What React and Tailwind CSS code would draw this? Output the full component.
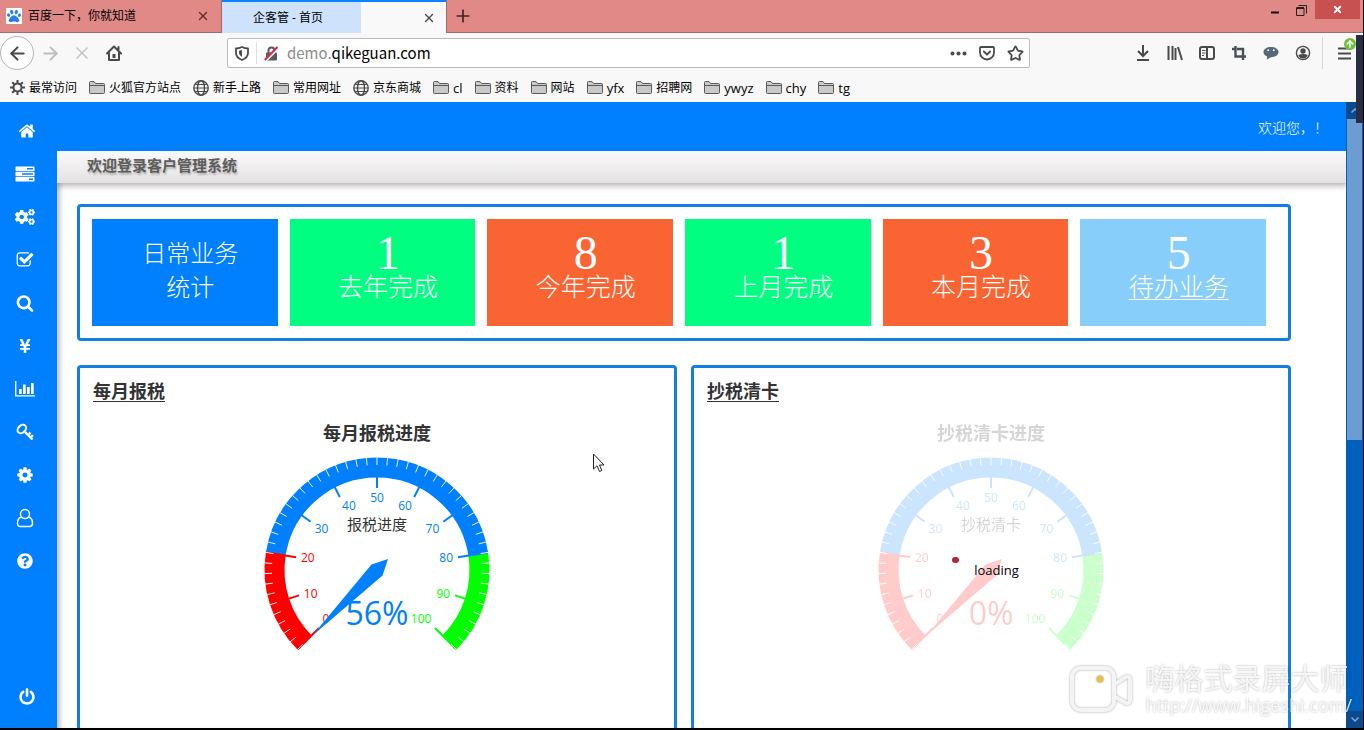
import React from "react";
import { ArrowLeft, ArrowRight, ArrowUp, X, Plus, Star } from "lucide-react";
import { FaCogs, FaYenSign, FaQuestionCircle, FaPaw } from "react-icons/fa";

const BLUE = "#0080ff";
const RED = "#ff0000";
const GREEN = "#00ff00";

const Fa = ({ d, size = 18 }) => (
  <svg viewBox="0 0 1792 1792" width={size} height={size} fill="currentColor">
    <path d={d} />
  </svg>
);

const HOME =
  "M1472 992v480q0 26-19 45t-45 19h-384v-384h-256v384h-384q-26 0-45-19t-19-45v-480q0-1 .5-3t.5-3l575-474 575 474q1 2 1 6zm223-69l-62 74q-8 9-21 11h-3q-13 0-21-7l-692-577-692 577q-12 8-24 7-13-2-21-11l-62-74q-8-10-7-23.5t11-21.5l719-599q32-26 76-26t76 26l244 204v-195q0-14 9-23t23-9h192q14 0 23 9t9 23v408l219 182q10 8 11 21.5t-7 23.5z";
const COG =
  "M1152 896q0-106-75-181t-181-75-181 75-75 181 75 181 181 75 181-75 75-181zm512-109v222q0 12-8 23t-20 13l-185 28q-19 54-39 91 35 50 107 138 10 12 10 25t-9 23q-27 37-99 108t-94 71q-12 0-26-9l-138-108q-44 23-91 38-16 136-29 186-7 28-36 28h-222q-14 0-24.5-8.5t-11.5-21.5l-28-184q-49-16-90-37l-141 107q-10 9-25 9-14 0-25-11-126-114-165-168-7-10-7-23 0-12 8-23 15-21 51-66.5t54-70.5q-27-50-41-99l-183-27q-13-2-21-12.5t-8-23.5v-222q0-12 8-23t19-13l186-28q14-46 39-92-40-57-107-138-10-12-10-24 0-10 9-23 26-36 98.5-107.5t94.5-71.5q13 0 26 10l138 107q44-23 91-38 16-136 29-186 7-28 36-28h222q14 0 24.5 8.5t11.5 21.5l28 184q49 16 90 37l142-107q9-9 24-9 13 0 25 10 129 119 165 170 7 8 7 22 0 12-8 23-15 21-51 66.5t-54 70.5q26 50 41 98l183 28q13 2 21 12.5t8 23.5z";
const SEARCH =
  "M1216 832q0-185-131.5-316.5t-316.5-131.5-316.5 131.5-131.5 316.5 131.5 316.5 316.5 131.5 316.5-131.5 131.5-316.5zm512 832q0 52-38 90t-90 38q-54 0-90-38l-343-342q-179 124-399 124-143 0-273.5-55.5t-225-150-150-225-55.5-273.5 55.5-273.5 150-225 225-150 273.5-55.5 273.5 55.5 225 150 150 225 55.5 273.5q0 220-124 399l343 343q37 37 37 90z";
const CHECK =
  "M1472 930v318q0 119-84.5 203.5t-203.5 84.5h-832q-119 0-203.5-84.5t-84.5-203.5v-832q0-119 84.5-203.5t203.5-84.5h832q63 0 117 25 15 7 18 23 3 17-9 29l-49 49q-10 10-23 10-3 0-9-2-23-6-45-6h-832q-66 0-113 47t-47 113v832q0 66 47 113t113 47h832q66 0 113-47t47-113v-254q0-13 9-22l64-64q10-10 23-10 6 0 12 3 20 8 20 29zm231-489l-814 814q-24 24-57 24t-57-24l-430-430q-24-24-24-57t24-57l110-110q24-24 57-24t57 24l263 263 647-647q24-24 57-24t57 24l110 110q24 24 24 57t-24 57z";
const POWER =
  "M1664 896q0 156-61 298t-164 245-245 164-298 61-298-61-245-164-164-245-61-298q0-182 80.5-343t226.5-270q43-32 95.5-25t83.5 50q32 42 24.5 94.5t-49.5 84.5q-98 74-151.5 181t-53.5 228q0 104 40.5 198.5t109.5 163.5 163.5 109.5 198.5 40.5 198.5-40.5 163.5-109.5 109.5-163.5 40.5-198.5q0-121-53.5-228t-151.5-181q-42-32-49.5-84.5t24.5-94.5q31-43 84-50t95 25q146 109 226.5 270t80.5 343zm-640-768v640q0 52-38 90t-90 38-90-38-38-90v-640q0-52 38-90t90-38 90 38 38 90z";

const ServerIcon = () => (
  <svg width="20" height="16" viewBox="0 0 20 16">
    <g fill="currentColor">
      <rect x="0.5" y="0.5" width="19" height="4.4" rx="0.6" />
      <rect x="0.5" y="5.8" width="19" height="4.4" rx="0.6" />
      <rect x="0.5" y="11.1" width="19" height="4.4" rx="0.6" />
    </g>
    <path d="M12 2.7h6M7 8h11M14 13.3h4" stroke={BLUE} strokeWidth="1.4" />
  </svg>
);

const ChartIcon = () => (
  <svg width="20" height="16" viewBox="0 0 20 16" fill="currentColor">
    <path d="M0 0h1.4v14.2H20v1.4H0zM4 8h2.7v5H4zM8 3.5h2.7V13H8zM12 6h2.7v7H12zM16 2h2.7v11H16z" />
  </svg>
);

const KeyIcon = () => (
  <svg width="18" height="18" viewBox="0 0 18 18" fill="none" stroke="currentColor">
    <ellipse cx="5.8" cy="6" rx="3.6" ry="4.8" transform="rotate(45 5.8 6)" strokeWidth="2" />
    <path d="M9 9l7.5 7.5" strokeWidth="2.4" />
    <path d="M12 12l2.6-2.4M14.6 14.4l2.4-2.2" strokeWidth="2.2" />
  </svg>
);

const UserIcon = () => (
  <svg width="18" height="20" viewBox="0 0 18 20" fill="none" stroke="currentColor" strokeWidth="1.4">
    <circle cx="9" cy="6" r="4.5" />
    <path d="M5.2 9.2C2.500 9.800 1.500 12.400 1.500 15.200c0 2.100 1.200 3.300 3 3.300h9c1.800 0 3-1.200 3-3.300 0-2.800-1-5.400-3.700-6" />
  </svg>
);

const menu = [
  { name: "首页", icon: <Fa d={HOME} />, shift: true },
  { name: "业务", icon: <ServerIcon /> },
  { name: "流程", icon: <FaCogs size={20} /> },
  { name: "任务", icon: <Fa d={CHECK} /> },
  { name: "查询", icon: <Fa d={SEARCH} /> },
  { name: "收费", icon: <FaYenSign size={16} /> },
  { name: "统计", icon: <ChartIcon /> },
  { name: "密码", icon: <KeyIcon /> },
  { name: "设置", icon: <Fa d={COG} /> },
  { name: "用户", icon: <UserIcon /> },
  { name: "帮助", icon: <FaQuestionCircle size={16} /> },
];

const FolderIcon = () => (
  <svg width="16" height="16" viewBox="0 0 16 16" fill="#c9c9c9" stroke="#5a5a5a">
    <path d="M.5 12.500v-10q0-1 1-1h3.500l1.500 2h8q1 0 1 1v8q0 1-1 1h-13q-1 0-1-1z" />
    <path d="M.5 5.500h15" />
  </svg>
);

const GlobeIcon = () => (
  <svg width="16" height="16" viewBox="0 0 16 16" fill="none" stroke="#4a4a4a" strokeWidth="1.4">
    <circle cx="8" cy="8" r="7.2" />
    <ellipse cx="8" cy="8" rx="3.500" ry="7.2" />
    <path d="M1 8h14M2 4.500h12M2 11.500h12" strokeWidth="1" />
  </svg>
);

const GearIcon = () => (
  <svg width="15" height="15" viewBox="0 0 15 15" fill="none" stroke="#4a4a4a">
    <circle cx="7.500" cy="7.500" r="4" strokeWidth="2" />
    <path d="M7.500 0v3M7.500 12v3M0 7.500h3M12 7.500h3M2.200 2.200l2.100 2.100M10.700 10.700l2.100 2.100M2.200 12.800l2.100-2.100M10.700 4.300l2.100-2.100" strokeWidth="2" />
  </svg>
);

const bookmarks = [
  ["最常访问", "gear"],
  ["火狐官方站点"],
  ["新手上路", "globe"],
  ["常用网址"],
  ["京东商城", "globe"],
  ["cl"],
  ["资料"],
  ["网站"],
  ["yfx"],
  ["招聘网"],
  ["ywyz"],
  ["chy"],
  ["tg"],
];

const stats = [
  { value: "1", label: "去年完成", color: "bg-[#00ff80]" },
  { value: "8", label: "今年完成", color: "bg-[#fa6432]" },
  { value: "1", label: "上月完成", color: "bg-[#00ff80]" },
  { value: "3", label: "本月完成", color: "bg-[#fa6432]" },
];

function TabStrip() {
  return (
    <div className="flex h-[33px] shrink-0 bg-[#e18987] text-xs text-black">
      <div className="flex w-[222px] items-center border-r border-b border-[#9c6b78] pl-[6px] pr-[11px]">
        <span className="flex h-4 w-4 items-center justify-center bg-white text-[#2a80e8]">
          <FaPaw size={14} />
        </span>
        <span className="ml-[6px] flex-1">百度一下，你就知道</span>
        <button aria-label="关闭标签页">
          <X size={14} strokeWidth={2.2} color="#5a2b2b" />
        </button>
      </div>
      <div className="flex w-[224px] items-center border-t-2 border-[#0a84ff] bg-[#f9f9fa] pr-[10px]">
        <span className="flex h-full w-[139px] items-center bg-[#cfe2fc] pl-[31px]">企客管 - 首页</span>
        <button aria-label="关闭标签页" className="ml-auto">
          <X size={14} strokeWidth={2.2} color="#444" />
        </button>
      </div>
      <div className="flex flex-1 items-start border-b border-l border-[#9c6b78]">
        <button aria-label="新建标签页" className="self-center pl-[6px]">
          <Plus size={20} strokeWidth={2} color="#4a2020" />
        </button>
        <button aria-label="最小化" className="ml-auto flex h-5 w-6 items-center justify-center">
          <svg width="8" height="10"><path d="M0 7.500h8" stroke="#111" strokeWidth="2" /></svg>
        </button>
        <button aria-label="还原" className="flex h-5 w-7 items-center justify-center">
          <svg width="11" height="11" fill="none" stroke="#222">
            <path d="M.5 3h7.500v7.500H.5zM2.500 .5h8v8" />
            <path d="M.5 3h7.500" strokeWidth="2" />
          </svg>
        </button>
        <button aria-label="关闭" className="mr-[3px] flex h-[19px] w-[45px] items-center justify-center bg-[#c75050]">
          <X size={11} strokeWidth={4} color="#fff" />
        </button>
      </div>
    </div>
  );
}

function NavBar() {
  return (
    <div className="flex h-10 shrink-0 items-center text-[#4a4a4c]">
      <button aria-label="后退" className="flex h-[34px] w-[34px] items-center justify-center rounded-full border border-[#b5b5b5] bg-white">
        <ArrowLeft size={21} strokeWidth={2.4} />
      </button>
      <button aria-label="前进" className="flex w-8 justify-center text-[#bdbdbd]">
        <ArrowRight size={21} strokeWidth={2.2} />
      </button>
      <button aria-label="停止" className="flex w-8 justify-center text-[#c6c6c6]">
        <X size={20} strokeWidth={2} />
      </button>
      <button aria-label="主页" className="flex w-8 justify-center">
        <svg width="16" height="16" viewBox="0 0 16 16" fill="none" stroke="currentColor" strokeWidth="2" strokeLinejoin="round" strokeLinecap="round">
          <path d="M1 8.500l7-7 7 7M3 7.500V15h10V7.500M12.500 2v3" />
          <path d="M8 9v4" strokeWidth="3" strokeLinecap="butt" />
        </svg>
      </button>
      <div className="ml-[97px] mr-[105px] flex h-[30px] flex-1 items-center rounded-xs border border-[#bcbcbc] bg-white pr-[5px]">
        <svg className="ml-[7px]" width="14" height="15" viewBox="0 0 14 15" fill="none" stroke="currentColor" strokeWidth="1.800">
          <path d="M1 2.500Q4 2.500 7 1q3 1.500 6 1.500V7q0 4.500-6 7-6-2.500-6-7z" strokeLinejoin="round" />
          <path d="M7 4v7Q4 9.500 4 7V4.800z" fill="currentColor" stroke="none" />
        </svg>
        <span className="ml-[7px] h-[22px] w-px bg-[#dedede]" />
        <svg className="ml-[7px]" width="15" height="15" viewBox="0 0 15 15">
          <rect x="2" y="6.500" width="11" height="8" rx="1" fill="#5a5a5a" />
          <path d="M4.500 7V4.500a3 3 0 016 0V7" fill="none" stroke="#5a5a5a" strokeWidth="2" />
          <path d="M1.800 15L14.500 2.300" stroke="#fff" strokeWidth="2" />
          <path d="M.7 14L13.500 1" stroke="#d7264c" strokeWidth="2" />
        </svg>
        <label htmlFor="url" className="ml-[8px] text-[15px] leading-5 text-[#8b8b8b] font-['Noto_Sans_CJK_SC',sans-serif]">demo.</label>
        <input id="url" type="text" defaultValue="qikeguan.com" className="h-5 min-w-0 flex-1 text-[15px] leading-5 text-black outline-none font-['Noto_Sans_CJK_SC',sans-serif]" />
        <div className="flex items-center gap-3">
          <button aria-label="页面操作">
            <svg width="17" height="5" fill="currentColor"><circle cx="2.500" cy="2.500" r="2" /><circle cx="8.500" cy="2.500" r="2" /><circle cx="14.500" cy="2.500" r="2" /></svg>
          </button>
          <button aria-label="保存到 Pocket">
            <svg width="16" height="15" viewBox="0 0 16 15" fill="none" stroke="currentColor" strokeWidth="1.800" strokeLinecap="round" strokeLinejoin="round">
              <path d="M2 1h12q1 0 1 1v4.500a7 7 0 01-14 0V2q0-1 1-1zM4.800 5.500L8 8.500l3.200-3" />
            </svg>
          </button>
          <button aria-label="收藏">
            <Star size={17} strokeWidth={2.5} />
          </button>
        </div>
      </div>
      <div className="flex items-center gap-4">
        <svg width="16" height="16" viewBox="0 0 16 16" fill="none" stroke="currentColor" strokeWidth="2">
          <path d="M8 0v10M3 6l5 5 5-5M2 15h12" />
        </svg>
        <svg width="16" height="16" viewBox="0 0 16 16" fill="none" stroke="currentColor" strokeWidth="2">
          <path d="M1.500 1v14M5.500 1v14M8.500 3v12M11 2l4 13" />
        </svg>
        <svg width="16" height="16" viewBox="0 0 16 16" fill="none" stroke="currentColor" strokeWidth="2">
          <rect x="1" y="2" width="14" height="12" rx="2" />
          <path d="M8 2v12" />
          <path d="M3 5.500h3.500M3 8h3.500M3 10.500h2" strokeWidth="1.200" />
        </svg>
        <svg width="16" height="16" viewBox="0 0 16 16" fill="none" stroke="#46505c" strokeWidth="2.400">
          <path d="M1 4h3M4.500 1v10.500H15M6 4h6v8M12 12v3" />
        </svg>
        <svg width="16" height="16" viewBox="0 0 17 16">
          <path d="M8.500 1.500c4.500 0 8 2.200 8 5.500s-3.500 5.500-8 5.500L4 15l.5-3.200C2 11 .5 9.200.5 7c0-3.300 3.500-5.500 8-5.500z" fill="#596879" />
          <circle cx="5.500" cy="5" r="1" fill="#fff" /><circle cx="11.500" cy="5" r="1" fill="#fff" />
        </svg>
        <svg width="16" height="16" viewBox="0 0 16 16">
          <circle cx="8" cy="8" r="6.600" fill="none" stroke="currentColor" strokeWidth="1.400" />
          <circle cx="8" cy="6" r="2.700" fill="currentColor" />
          <path d="M3.200 10q4.800-2 9.600 0-1.500 3.500-4.800 3.500T3.200 10z" fill="currentColor" />
        </svg>
      </div>
      <span className="ml-[11px] h-8 w-px bg-[#d8d8d8]" />
      <button aria-label="打开菜单" className="relative mr-[12px] ml-[15px]">
        <svg width="13" height="13" stroke="currentColor" strokeWidth="2"><path d="M0 1.500h13M0 6.500h13M0 11.500h13" /></svg>
        <span className="absolute -top-[9px] left-[6px] flex h-3 w-3 items-center justify-center rounded-full bg-[#6fbf3a]">
          <ArrowUp size={10} strokeWidth={3.500} color="#fff" />
        </span>
      </button>
    </div>
  );
}

function Bookmarks() {
  return (
    <div className="flex h-[29px] shrink-0 items-center gap-3 pl-[10px] text-xs text-black">
      {bookmarks.map(([name, icon]) => (
        <a
          key={name}
          href="#"
          className={`flex items-center gap-1 whitespace-nowrap ${/^[a-z]/.test(name) ? "text-[13px] leading-4" : ""}`}
        >
          {icon === "gear" ? <GearIcon /> : icon === "globe" ? <GlobeIcon /> : <FolderIcon />}
          {name}
        </a>
      ))}
    </div>
  );
}

function Sidebar() {
  return (
    <nav className="flex w-[57px] shrink-0 flex-col bg-[#0080ff] pt-[7px] text-white">
      {menu.map((m) => (
        <a
          key={m.name}
          href="#"
          aria-label={m.name}
          className={`flex h-[43px] items-center justify-center ${m.shift ? "pr-[3px]" : "pr-[7px]"}`}
        >
          {m.icon}
        </a>
      ))}
      <a href="#" aria-label="退出" className="mt-auto mb-[10px] flex h-[43px] items-center justify-center pr-[3px]">
        <Fa d={POWER} />
      </a>
    </nav>
  );
}

const polar = (value, r) => {
  const a = ((225 - value * 2.7) * Math.PI) / 180;
  return [r * Math.cos(a), -r * Math.sin(a)];
};

const arc = (from, to) => {
  const [x1, y1] = polar(from, 102.5);
  const [x2, y2] = polar(to, 102.5);
  return `M${x1} ${y1}A102.5 102.5 0 0 1 ${x2} ${y2}`;
};

const colorOf = (v) => (v <= 20 ? RED : v <= 80 ? BLUE : GREEN);

function Gauge({ name, text, color }) {
  const ticks = Array.from({ length: 51 }, (_, i) => i * 2);
  const labels = Array.from({ length: 11 }, (_, i) => i * 10);

  return (
    <svg viewBox="-120 -125 240 225" width="240" height="225" className="mx-auto block">
      <g fill="none" strokeWidth="20">
        <path d={arc(0, 20)} stroke={RED} />
        <path d={arc(20, 80)} stroke={BLUE} />
        <path d={arc(80, 100)} stroke={GREEN} />
      </g>
      {labels.map((v) => {
        const [x1, y1] = polar(v, 112);
        const [x2, y2] = polar(v, 82);
        return <line key={v} x1={x1} y1={y1} x2={x2} y2={y2} stroke={colorOf(v)} strokeWidth="2" />;
      })}
      {ticks.map((v) => {
        const [x1, y1] = polar(v, 113);
        const [x2, y2] = polar(v, 105);
        return <line key={v} x1={x1} y1={y1} x2={x2} y2={y2} stroke="#eee" strokeWidth="1" />;
      })}
      {labels.map((v) => {
        const [x, y] = polar(v, 77);
        const anchor = x < -30 ? "start" : x > 30 ? "end" : "middle";
        const dy = y < -30 ? 4 : y > 30 ? -6 : 0;
        return (
          <text key={v} x={x} y={y + dy} fontSize="12" fill={colorOf(v)} textAnchor={anchor} dominantBaseline="central">
            {v}
          </text>
        );
      })}
      <text x="0" y="-46" fontSize="15" fill="#333" textAnchor="middle" dominantBaseline="central">{name}</text>
      <path d="M-65 66L-5.500-5.500 11-11 5.500 5.500z" fill={color} />
      <text x="0" y="42" fontSize="32" fill={color} textAnchor="middle" dominantBaseline="central">{text}</text>
    </svg>
  );
}

function Panel({ title, children }) {
  return (
    <section className="rounded-t-sm border-[3px] border-b-0 border-[#147de6] pt-[11px]">
      <h2 className="px-[13px] text-lg leading-6 font-bold text-[#333] underline decoration-1 underline-offset-3">{title}</h2>
      {children}
    </section>
  );
}

const ChartTitle = ({ children }) => (
  <h3 className="pt-[18px] text-center text-lg leading-6 font-bold text-[#333]">{children}</h3>
);

function Dashboard() {
  return (
    <main className="flex min-h-0 flex-1 flex-col overflow-hidden bg-white">
      <h1 className="h-8 shrink-0 bg-linear-to-b from-[#fbfafa] to-[#e4e2e3] pl-[30px] text-[15px] leading-7 font-bold text-[#5c5c5c] shadow-[0_2px_6px_1px_rgba(0,0,0,0.28)] text-shadow-[1px_2px_2px_rgba(0,0,0,0.25)]">
        欢迎登录客户管理系统
      </h1>
      <div className="flex min-h-0 flex-1 flex-col gap-6 pt-[21px] pr-[55px] pl-5 shadow-[inset_6px_0_5px_-3px_rgba(0,0,0,0.26)]">
        <section className="grid grid-cols-6 gap-3 rounded-sm border-[3px] border-[#147de6] py-3 pr-[22px] pl-3 text-center text-2xl leading-[34px] font-light text-white">
          <div className="h-[107px] bg-[#0080ff] pt-[17px] pl-[11px] leading-[34px]">
            日常业务
            <br />
            统计
          </div>
          {stats.map((s, i) => (
            <div key={i} className={`h-[107px] pt-[17px] pl-[11px] ${s.color}`}>
              <div className="font-['Liberation_Serif',serif] text-5xl leading-[34px]">{s.value}</div>
              <div className="text-[25px] leading-[32px]">{s.label}</div>
            </div>
          ))}
          <div className="h-[107px] bg-[#87cefa] pt-[17px] pl-[11px]">
            <div className="font-['Liberation_Serif',serif] text-5xl leading-[34px]">5</div>
            <a href="#" className="block text-[25px] leading-[32px] underline decoration-1 underline-offset-3">待办业务</a>
          </div>
        </section>
        <div className="grid min-h-0 flex-1 grid-cols-2 gap-[14px]">
          <Panel title="每月报税">
            <ChartTitle>每月报税进度</ChartTitle>
            <Gauge name="报税进度" text="56%" color={BLUE} />
          </Panel>
          <Panel title="抄税清卡">
            <div className="relative">
              <div className="opacity-20">
                <ChartTitle>抄税清卡进度</ChartTitle>
                <Gauge name="抄税清卡" text="0%" color={RED} />
              </div>
              <div className="absolute inset-x-0 top-[157px] flex justify-center pl-[11px] text-[13px] leading-5 text-black">
                <span className="relative">
                  loading
                  <span className="absolute -top-[3px] -left-[22px] h-[6px] w-[7px] rounded-full bg-[#b0283a]" />
                </span>
              </div>
            </div>
          </Panel>
        </div>
      </div>
    </main>
  );
}

function Scrollbar() {
  return (
    <div className="flex w-[17px] shrink-0 flex-col bg-[#0060bd]">
      <button aria-label="向上滚动" className="flex h-[17px] items-center justify-center bg-[#0b4a8d]">
        <svg width="8" height="5" fill="none" stroke="#7fa8d4" strokeWidth="1.500"><path d="M.5 4.500L4 1l3.500 3.500" /></svg>
      </button>
      <div className="mx-px h-[321px] bg-[#6b9dd3]" />
      <button aria-label="向下滚动" className="mt-auto flex h-[17px] items-center justify-center bg-[#0b4a8d]">
        <svg width="8" height="5" fill="none" stroke="#7fa8d4" strokeWidth="1.500"><path d="M.5 .5L4 4 7.500 .5" /></svg>
      </button>
    </div>
  );
}

function Watermark() {
  return (
    <div className="pointer-events-none absolute right-[11px] bottom-3 flex items-center gap-3 text-white/80 drop-shadow-[0_0_1px_rgba(0,0,0,0.35)]">
      <svg width="66" height="50" viewBox="0 0 66 50" fill="none" stroke="#f4f4f4" strokeWidth="4">
        <rect x="4" y="3" width="42" height="42" rx="9" />
        <path d="M47 19l11-7q4-1 4 3v20q0 4-4 3l-11-6" />
        <circle cx="32" cy="14" r="3.500" fill="#e3c04f" stroke="none" />
      </svg>
      <div>
        <div className="text-[29px] leading-[30px]">嗨格式录屏大师</div>
        <div className="text-lg leading-[22px]">http://www.higeshi.com/</div>
      </div>
    </div>
  );
}

export default function App() {
  return (
    <div className="relative flex h-screen flex-col overflow-hidden border-r border-b-2 border-black bg-[#f8f8f8] font-['Open_Sans','Noto_Sans_CJK_SC',sans-serif]">
      <TabStrip />
      <NavBar />
      <Bookmarks />
      <div className="flex min-h-0 flex-1">
        <Sidebar />
        <div className="flex min-w-0 flex-1 flex-col">
          <header className="flex h-[49px] shrink-0 items-center justify-end bg-[#0080ff] pr-[18px] text-sm font-light text-white">
            <span className="pt-[2px]">欢迎您，！</span>
          </header>
          <Dashboard />
        </div>
        <Scrollbar />
      </div>
      <div className="absolute top-[35px] right-0 h-[88px] w-[7px] bg-[#262d44]" />
      <Watermark />
      <svg className="absolute top-[453px] left-[593px]" width="12" height="20" viewBox="0 0 12 20">
        <path d="M.5 1v15l3.500-3.300L6.500 18.500l2.300-1L6.500 12H11z" fill="#fff" stroke="#222" />
      </svg>
    </div>
  );
}
